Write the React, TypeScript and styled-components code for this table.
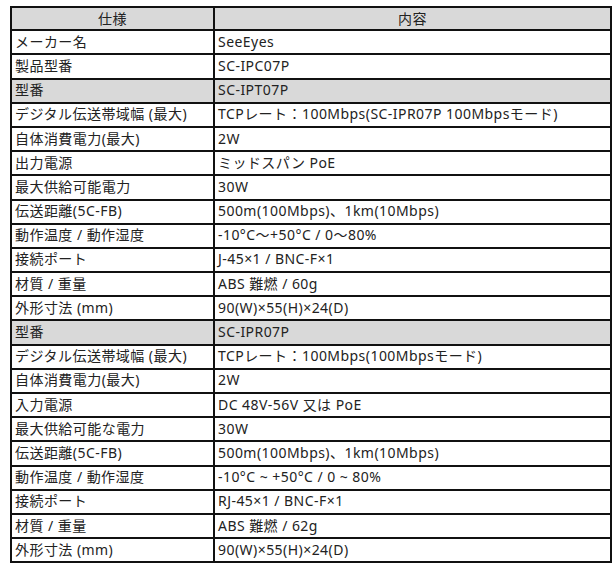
import React from "react";
import styled, { createGlobalStyle } from "styled-components";

const GlobalStyle = createGlobalStyle`
  html, body {
    margin: 0;
    padding: 0;
    background: #ffffff;
  }
  body {
    font-family: "Noto Sans", "Noto Sans CJK JP", sans-serif;
    color: #222222;
  }
`;

const Page = styled.div`
  padding: 6px 0 0 10px;
`;

const SpecTable = styled.table`
  width: 602px;
  border-collapse: collapse;
  table-layout: fixed;
  border: 2px solid #111;
  font-size: 14px;
  line-height: 1;
  letter-spacing: 0.45px;
`;

const ColKey = styled.col`
  width: 203px;
`;

const ColValue = styled.col`
  width: auto;
`;

const Row = styled.tr<{ $shaded?: boolean }>`
  background: ${(p) => (p.$shaded ? "#d9d9d9" : "#ffffff")};
`;

const HeadCell = styled.th`
  height: 21.2px;
  padding: 0 3px;
  border: 2px solid #111;
  background: #d9d9d9;
  font-weight: 400;
  text-align: center;
  vertical-align: middle;
`;

const Cell = styled.td`
  height: 21.2px;
  padding: 0 3px 1px 3px;
  border: 2px solid #111;
  text-align: left;
  vertical-align: middle;
  white-space: nowrap;
  overflow: hidden;
`;

type Spec = { key: string; value: string; shaded?: boolean };

const specs: Spec[] = [
  { key: "メーカー名", value: "SeeEyes" },
  { key: "製品型番", value: "SC-IPC07P" },
  { key: "型番", value: "SC-IPT07P", shaded: true },
  { key: "デジタル伝送帯域幅 (最大)", value: "TCPレート：100Mbps(SC-IPR07P 100Mbpsモード)" },
  { key: "自体消費電力(最大)", value: "2W" },
  { key: "出力電源", value: "ミッドスパン PoE" },
  { key: "最大供給可能電力", value: "30W" },
  { key: "伝送距離(5C-FB)", value: "500m(100Mbps)、1km(10Mbps)" },
  { key: "動作温度 / 動作湿度", value: "-10°C〜+50°C / 0〜80%" },
  { key: "接続ポート", value: "J-45×1 / BNC-F×1" },
  { key: "材質 / 重量", value: "ABS 難燃 / 60g" },
  { key: "外形寸法 (mm)", value: "90(W)×55(H)×24(D)" },
  { key: "型番", value: "SC-IPR07P", shaded: true },
  { key: "デジタル伝送帯域幅 (最大)", value: "TCPレート：100Mbps(100Mbpsモード)" },
  { key: "自体消費電力(最大)", value: "2W" },
  { key: "入力電源", value: "DC 48V-56V 又は PoE" },
  { key: "最大供給可能な電力", value: "30W" },
  { key: "伝送距離(5C-FB)", value: "500m(100Mbps)、1km(10Mbps)" },
  { key: "動作温度 / 動作湿度", value: "-10°C ~ +50°C / 0 ~ 80%" },
  { key: "接続ポート", value: "RJ-45×1 / BNC-F×1" },
  { key: "材質 / 重量", value: "ABS 難燃 / 62g" },
  { key: "外形寸法 (mm)", value: "90(W)×55(H)×24(D)" },
];

export default function App() {
  return (
    <>
      <GlobalStyle />
      <Page>
        <SpecTable>
          <colgroup>
            <ColKey />
            <ColValue />
          </colgroup>
          <thead>
            <Row $shaded>
              <HeadCell>仕様</HeadCell>
              <HeadCell>内容</HeadCell>
            </Row>
          </thead>
          <tbody>
            {specs.map((s, i) => (
              <Row key={i} $shaded={s.shaded}>
                <Cell>{s.key}</Cell>
                <Cell>{s.value}</Cell>
              </Row>
            ))}
          </tbody>
        </SpecTable>
      </Page>
    </>
  );
}
